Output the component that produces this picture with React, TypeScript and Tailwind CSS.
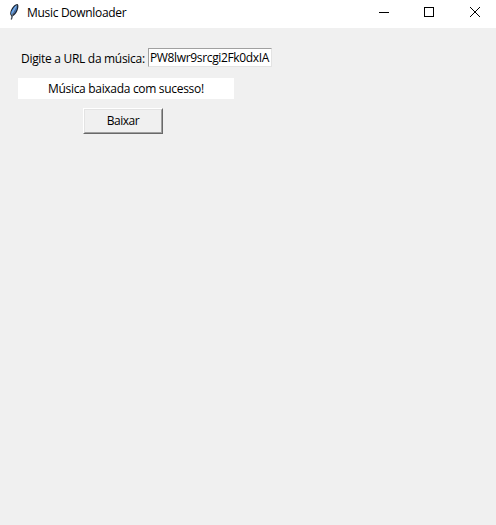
import type { ReactNode } from 'react';

function FeatherIcon() {
  return (
    <svg width="20" height="24" viewBox="0 0 20 24" className="block shrink-0">
      <path d="M13.3 4 C14.7 4.2 14.7 7.5 13.5 10.5 C12.3 13.4 10.8 15.2 8.8 16.2 L8 19.5 L6.8 19.5 L7.2 16 C5.7 14.5 6 12 7.4 9.2 C8.8 6.4 11.3 4 13.3 4Z" fill="#18202a" />
      <path d="M12.9 4.9 C10.6 6 8.5 8.8 7.5 11.6 C6.9 13.5 7 14.4 7.7 15 L11.7 8Z" fill="#64a5f0" />
      <path d="M13.2 5.5 C13.7 8 12.2 12.2 9.2 14.8 L11.5 8.5Z" fill="#3f74bd" />
      <path d="M12.8 5.5 L10.4 10 L8 16 L7.4 18.5" fill="none" stroke="#c4d8ec" strokeWidth=".5" />
    </svg>
  );
}

function TitleBar() {
  return (
    <header className="flex h-7 items-start bg-white">
      <div className="w-1 shrink-0" />
      <FeatherIcon />
      <Text className="ml-[3px] mt-[5px] tracking-[-0.31px]">Music Downloader</Text>
      <div className="ml-auto flex pr-[15px]">
        <svg width="102" height="24" viewBox="0 0 102 24" fill="none" stroke="#000" className="block" shapeRendering="crispEdges">
          <path d="M0 12.5H10" />
          <rect x="45.5" y="7.5" width="9" height="9" />
          <path d="M91 7L101 17M101 7L91 17" shapeRendering="auto" />
        </svg>
      </div>
    </header>
  );
}

function Text({ children, className = '' }: { children: ReactNode; className?: string }) {
  return <span className={`block whitespace-nowrap text-[12px] leading-4 ${className}`}>{children}</span>;
}

export default function App() {
  return (
    <div className="h-[525px] w-[496px] overflow-hidden bg-[#f0f0f0] font-['Open_Sans','Noto_Sans',sans-serif] text-black">
      <TitleBar />
      <main className="pl-[18px] pt-5">
        <div className="flex h-[20px] items-start">
          <Text className="ml-[3px] mt-[3px] w-[127px] tracking-[-0.3px]">Digite a URL da música:</Text>
          <div className="h-[19px] w-[124px] border border-b-[#e3e3e3] border-l-[#a0a0a0] border-r-[#e3e3e3] border-t-[#a0a0a0] bg-white pl-px">
            <Text className="mt-px tracking-[-0.35px]">PW8lwr9srcgi2Fk0dxIA</Text>
          </div>
        </div>
        <div className="mt-[10px] flex h-[21px] w-[216px] bg-white pl-[30px] pt-[3px]">
          <Text className="tracking-[-0.31px]">Música baixada com sucesso!</Text>
        </div>
        <button className="ml-[65px] mt-[9px] block h-[26px] w-20 border border-b-[#696969] border-l-white border-r-[#696969] border-t-white bg-[#f0f0f0]">
          <div className="flex h-full justify-center border border-b-[#a0a0a0] border-l-[#e3e3e3] border-r-[#a0a0a0] border-t-[#e3e3e3] pt-[3px]">
            <Text className="tracking-[-0.45px]">Baixar</Text>
          </div>
        </button>
      </main>
    </div>
  );
}
